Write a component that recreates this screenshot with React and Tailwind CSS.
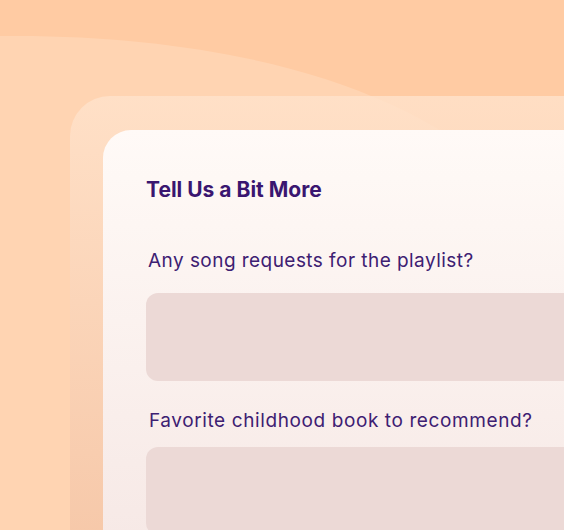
export default function App() {
  return (
    <div className="relative w-[564px] h-[530px] overflow-hidden bg-[#ffcba3]" style={{ fontFamily: "Inter, 'Noto Sans', sans-serif" }}>
      <svg className="absolute left-0 top-0" width="564" height="530" viewBox="0 0 564 530">
        <path d="M0 36 C 150 34 290 58 390 104 C 470 140 540 200 600 260 L 600 530 L 0 530 Z" fill="#ffd4b2" />
      </svg>
      <div className="relative pl-[70px] pt-[96px]">
        <div className="w-[560px] h-[460px] rounded-tl-[40px] bg-gradient-to-b from-[#ffe3cc]/80 to-[#f5c6a7]/90 pl-[33px] pt-[34px]">
          <div className="h-[430px] rounded-tl-[28px] bg-gradient-to-b from-[#fffaf7] to-[#f6e8e5] pl-[43px] pt-[46px]">
            <h1 className="text-[21px] leading-[28px] font-bold text-[#3a1670] tracking-[0px]">Tell Us a Bit More</h1>
            <label className="block mt-[45px] text-[19px] leading-[24px] text-[#3d2072] tracking-[0.45px] pl-[2px]">Any song requests for the playlist?</label>
            <div className="mt-[20px] h-[88px] rounded-l-[12px] bg-[#ecd9d6]"></div>
            <label className="block mt-[28px] text-[19px] leading-[24px] text-[#3d2072] tracking-[0.6px] pl-[3px]">Favorite childhood book to recommend?</label>
            <div className="mt-[14px] h-[88px] rounded-l-[12px] bg-[#ecd9d6]"></div>
          </div>
        </div>
      </div>
    </div>
  );
}
